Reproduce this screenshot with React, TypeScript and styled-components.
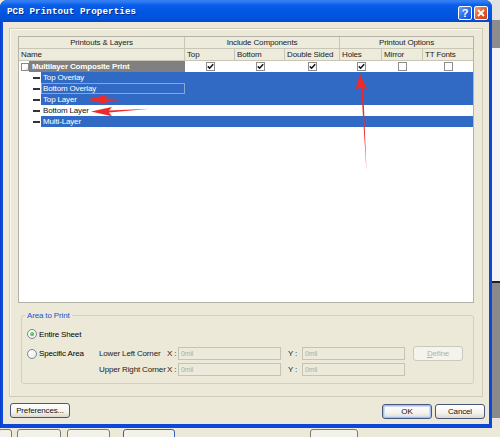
import React from "react";
import styled, { createGlobalStyle, css } from "styled-components";

const Global = createGlobalStyle`
  html, body { margin: 0; padding: 0; background: #ece9d8; }
  body {
    width: 500px; height: 437px; overflow: hidden;
    font-family: "Liberation Sans", Arial, sans-serif;
    font-size: 8px; letter-spacing: -0.15px; color: #000;
  }
  * { box-sizing: border-box; }
`;

const Screen = styled.div`
  position: relative;
  width: 500px;
  height: 437px;
  display: grid;
  grid-template-columns: 492px 8px;
  grid-template-rows: 428px 9px;
  background: #ece9d8;
  overflow: hidden;
`;

const Window = styled.div`
  display: flex;
  flex-direction: column;
  background: linear-gradient(90deg, #0630b8 0, #0a4ee0 1px, #0b48d8 3px);
  border-radius: 7px 7px 0 0;
  overflow: hidden;
`;

const TitleBar = styled.div`
  height: 22px;
  flex: 0 0 22px;
  display: flex;
  align-items: center;
  padding: 0 4px 0 7px;
  background: linear-gradient(180deg, #3a7ff0 0, #2a78f4 2px, #0a5ee8 5px, #0056e2 12px, #0052da 19px, #0848cc 22px);
`;

const Title = styled.div`
  flex: 1;
  font-family: "Liberation Mono", "DejaVu Sans Mono", monospace;
  font-weight: bold;
  font-size: 9.2px;
  letter-spacing: 0.1px;
  color: #fff;
  text-shadow: 1px 1px 0 #0a2c8c;
  white-space: pre;
  padding-top: 1px;
`;

const TitleButtons = styled.div`
  display: flex;
  gap: 2px;
  margin-top: 3px;
`;

const CapButton = styled.div<{ $kind: "help" | "close" }>`
  width: 14px;
  height: 14px;
  border: 1px solid #fff;
  border-radius: 2px;
  display: flex;
  align-items: center;
  justify-content: center;
  color: #fff;
  font-family: "Liberation Sans", Arial, sans-serif;
  font-weight: bold;
  font-size: 11px;
  letter-spacing: 0;
  ${(p) =>
    p.$kind === "help"
      ? css`background: linear-gradient(135deg, #6aa0ff, #2a64e8 60%, #1d52d8);`
      : css`background: linear-gradient(135deg, #f59a7a, #e25a2c 55%, #c8401a);`}
`;

const Body = styled.div`
  flex: 1;
  margin: 0 3px 4px 3px;
  background: #ece9d8;
  display: flex;
  flex-direction: column;
  padding: 6px 0 0 6px;
`;

const Panel = styled.div`
  width: 474px;
  height: 369px;
  border: 1px solid #cfccbc;
  box-shadow: inset 1px 1px 0 #f8f7f2;
  padding: 7px 8px 0 8px;
  display: flex;
  flex-direction: column;
`;

const DataGrid = styled.div`
  height: 267px;
  border: 1px solid #b4b2a8;
  background: #fff;
  display: flex;
  flex-direction: column;
  overflow: hidden;
`;

const COLS = "166px 50px 50px 55px 42px 41px 1fr";

const HeaderRow = styled.div`
  display: grid;
  grid-template-columns: ${COLS};
  height: 12px;
  background: #ecebdc;
`;

const HeadCell = styled.div<{ $span?: number; $center?: boolean; $last?: boolean }>`
  grid-column: span ${(p) => p.$span ?? 1};
  height: 12px;
  line-height: 11px;
  border-bottom: 1px solid #c9c6b6;
  border-right: ${(p) => (p.$last ? "none" : "1px solid #c9c6b6")};
  text-align: ${(p) => (p.$center ? "center" : "left")};
  padding-left: ${(p) => (p.$center ? "0" : "2px")};
  color: #222;
  white-space: nowrap;
  overflow: hidden;
`;

const DataRow = styled.div`
  display: grid;
  grid-template-columns: ${COLS};
  height: 11px;
`;

const CheckCell = styled.div`
  display: flex;
  align-items: center;
  justify-content: center;
  height: 11px;
`;

const Box = styled.div`
  width: 9px;
  height: 9px;
  border: 1px solid #8e8e8e;
  background: #fff;
  display: flex;
  align-items: center;
  justify-content: center;
`;

const NameCell = styled.div`
  display: flex;
  align-items: center;
  height: 11px;
  padding-left: 2px;
`;

const DocIcon = styled.div`
  width: 8px;
  height: 8px;
  border: 1px solid #8a8a8a;
  background: linear-gradient(135deg, #fff 60%, #d8d8d8);
`;

const CompositeLabel = styled.div`
  flex: 1;
  height: 11px;
  line-height: 11px;
  background: #808080;
  color: #fff;
  font-weight: bold;
  padding-left: 3px;
  white-space: nowrap;
`;

const LayerRow = styled.div`
  display: flex;
  height: 11px;
`;

const Connector = styled.div`
  width: 22px;
  flex: 0 0 22px;
  display: flex;
  align-items: center;
  &::before {
    content: "";
    display: block;
    margin-left: 14px;
    width: 7px;
    height: 2px;
    background: #333;
  }
`;

const LayerBody = styled.div<{ $selected: boolean }>`
  flex: 1;
  background: ${(p) => (p.$selected ? "#316ac5" : "#fff")};
`;

const LayerName = styled.div<{ $selected: boolean; $focus?: boolean }>`
  width: 144px;
  height: 11px;
  line-height: 11px;
  padding-left: 2px;
  color: ${(p) => (p.$selected ? "#fff" : "#111")};
  white-space: nowrap;
  ${(p) =>
    p.$focus &&
    css`
      outline: 1px solid #8da5d4;
      outline-offset: -1px;
    `}
`;

const GroupBox = styled.div`
  position: relative;
  margin: 12px 0 0 3px;
  height: 69px;
  border: 1px solid #d3d0c0;
  border-radius: 3px;
  padding: 11px 0 0 5px;
  display: grid;
  grid-template-columns: 72px 67px 12px 103px 21px 103px 8px 50px;
  grid-template-rows: 19px 16px 15px;
  align-items: start;
`;

const Legend = styled.span`
  position: absolute;
  top: -6px;
  left: 3px;
  padding: 0 2px;
  background: #ece9d8;
  color: #1c4fd0;
  line-height: 11px;
`;

const RadioOption = styled.label<{ $row: number }>`
  grid-column: 1;
  grid-row: ${(p) => p.$row};
  display: flex;
  align-items: center;
  gap: 2px;
  height: ${(p) => (p.$row === 1 ? 14 : 15)}px;
  white-space: nowrap;
`;

const RadioCircle = styled.span<{ $checked?: boolean }>`
  width: 10px;
  height: 10px;
  border-radius: 50%;
  border: 1px solid #7d8a99;
  background: radial-gradient(circle at 35% 35%, #fff, #e6e6e0);
  display: flex;
  align-items: center;
  justify-content: center;
  &::after {
    content: "";
    display: ${(p) => (p.$checked ? "block" : "none")};
    width: 4px;
    height: 4px;
    border-radius: 50%;
    background: radial-gradient(circle at 35% 35%, #7fe07f, #21a121);
  }
`;

const FieldLabel = styled.div<{ $row: number; $col: number; $pad?: number }>`
  grid-column: ${(p) => p.$col};
  grid-row: ${(p) => p.$row};
  height: 15px;
  line-height: 15px;
  padding-left: ${(p) => p.$pad ?? 0}px;
  white-space: nowrap;
  color: #222;
`;

const FieldInput = styled.div<{ $row: number; $col: number }>`
  grid-column: ${(p) => p.$col};
  grid-row: ${(p) => p.$row};
  margin-top: 1px;
  height: 13px;
  border: 1px solid #c5c3b6;
  background: #ebeadb;
  color: #b1afa3;
  font-size: 7px;
  line-height: 11px;
  padding-left: 2px;
`;

const DefineButton = styled.div`
  grid-column: 8;
  grid-row: 2;
  height: 15px;
  border: 1px solid #cbc9bb;
  border-radius: 3px;
  background: #f4f3ec;
  color: #b4b2a6;
  text-align: center;
  line-height: 13px;
  u { text-decoration: underline; }
`;

const Footer = styled.div`
  display: flex;
  justify-content: space-between;
  align-items: flex-start;
  margin-top: 6px;
  padding: 0 4px 0 1px;
`;

const ButtonGroup = styled.div`
  display: flex;
  gap: 3px;
  margin-top: 1px;
`;

const XPButton = styled.div<{ $w: number; $default?: boolean }>`
  width: ${(p) => p.$w}px;
  height: 15px;
  border: 1px solid #49587a;
  border-radius: 3px;
  background: linear-gradient(180deg, #ffffff 0, #f4f3ee 60%, #dcd8cc 100%);
  text-align: center;
  line-height: 13px;
  color: #111;
  white-space: nowrap;
  ${(p) =>
    p.$default &&
    css`
      box-shadow: inset 0 0 0 1px #a6c0ee, inset 0 0 0 2px #cddcf6;
    `}
`;

const RightStrip = styled.div`
  background: linear-gradient(
    180deg,
    #e2e2e2 0,
    #e2e2e2 20px,
    #8c8c8c 20px,
    #8c8c8c 48px,
    #f4f4f4 48px,
    #f4f4f4 281px,
    #1e1e1e 281px,
    #1e1e1e 283px,
    #8a8a8a 283px,
    #8a8a8a 418px,
    #e8e6dc 418px
  );
`;

const TaskStrip = styled.div`
  grid-column: 1 / span 2;
  display: flex;
  align-items: flex-start;
  background: #ece9d8;
  padding-top: 1px;
  overflow: hidden;
`;

const TaskTab = styled.div<{ $w: number; $ml: number; $blue?: boolean }>`
  width: ${(p) => p.$w}px;
  margin-left: ${(p) => p.$ml}px;
  height: 12px;
  border: 1px solid ${(p) => (p.$blue ? "#3a5fb8" : "#7b7b72")};
  border-radius: 3px;
  background: #f2f1ea;
  flex: 0 0 auto;
`;

const Annotations = styled.svg`
  position: absolute;
  left: 0;
  top: 0;
  width: 500px;
  height: 437px;
  pointer-events: none;
`;

const Check = () => (
  <svg width="7" height="7" viewBox="0 0 7 7">
    <path d="M0.8 3.4 L2.6 5.2 L6.2 1.2" fill="none" stroke="#111" strokeWidth="1.5" />
  </svg>
);

const CheckBox = ({ checked }: { checked: boolean }) => (
  <CheckCell>
    <Box>{checked && <Check />}</Box>
  </CheckCell>
);

const layers = [
  { name: "Top Overlay", selected: true },
  { name: "Bottom Overlay", selected: true, focus: true },
  { name: "Top Layer", selected: true },
  { name: "Bottom Layer", selected: false },
  { name: "Multi-Layer", selected: true },
];

export default function App() {
  return (
    <>
      <Global />
      <Screen>
        <Window>
          <TitleBar>
            <Title>PCB Printout Properties</Title>
            <TitleButtons>
              <CapButton $kind="help">?</CapButton>
              <CapButton $kind="close">
                <svg width="8" height="8" viewBox="0 0 8 8">
                  <path d="M1 1 L7 7 M7 1 L1 7" stroke="#fff" strokeWidth="1.8" />
                </svg>
              </CapButton>
            </TitleButtons>
          </TitleBar>
          <Body>
            <Panel>
              <DataGrid>
                <HeaderRow>
                  <HeadCell $center>Printouts &amp; Layers</HeadCell>
                  <HeadCell $span={3} $center>Include Components</HeadCell>
                  <HeadCell $span={3} $center $last>Printout Options</HeadCell>
                </HeaderRow>
                <HeaderRow>
                  <HeadCell>Name</HeadCell>
                  <HeadCell>Top</HeadCell>
                  <HeadCell>Bottom</HeadCell>
                  <HeadCell>Double Sided</HeadCell>
                  <HeadCell>Holes</HeadCell>
                  <HeadCell>Mirror</HeadCell>
                  <HeadCell $last>TT Fonts</HeadCell>
                </HeaderRow>
                <DataRow>
                  <NameCell>
                    <DocIcon />
                    <CompositeLabel>Multilayer Composite Print</CompositeLabel>
                  </NameCell>
                  <CheckBox checked />
                  <CheckBox checked />
                  <CheckBox checked />
                  <CheckBox checked />
                  <CheckBox checked={false} />
                  <CheckBox checked={false} />
                </DataRow>
                {layers.map((l) => (
                  <LayerRow key={l.name}>
                    <Connector />
                    <LayerBody $selected={l.selected}>
                      <LayerName $selected={l.selected} $focus={l.focus}>
                        {l.name}
                      </LayerName>
                    </LayerBody>
                  </LayerRow>
                ))}
              </DataGrid>
              <GroupBox>
                <Legend>Area to Print</Legend>
                <RadioOption $row={1}>
                  <RadioCircle $checked />
                  Entire Sheet
                </RadioOption>
                <RadioOption $row={2}>
                  <RadioCircle />
                  Specific Area
                </RadioOption>
                <FieldLabel $row={2} $col={2}>Lower Left Corner</FieldLabel>
                <FieldLabel $row={2} $col={3} $pad={1}>X :</FieldLabel>
                <FieldInput $row={2} $col={4}>0mil</FieldInput>
                <FieldLabel $row={2} $col={5} $pad={7}>Y :</FieldLabel>
                <FieldInput $row={2} $col={6}>0mil</FieldInput>
                <DefineButton>
                  <u>D</u>efine
                </DefineButton>
                <FieldLabel $row={3} $col={2}>Upper Right Corner</FieldLabel>
                <FieldLabel $row={3} $col={3} $pad={1}>X :</FieldLabel>
                <FieldInput $row={3} $col={4}>0mil</FieldInput>
                <FieldLabel $row={3} $col={5} $pad={7}>Y :</FieldLabel>
                <FieldInput $row={3} $col={6}>0mil</FieldInput>
              </GroupBox>
            </Panel>
            <Footer>
              <XPButton $w={60}>Preferences...</XPButton>
              <ButtonGroup>
                <XPButton $w={50} $default>OK</XPButton>
                <XPButton $w={50}>Cancel</XPButton>
              </ButtonGroup>
            </Footer>
          </Body>
        </Window>
        <RightStrip />
        <TaskStrip>
          <TaskTab $w={14} $ml={-2} />
          <TaskTab $w={44} $ml={5} />
          <TaskTab $w={43} $ml={6} />
          <TaskTab $w={52} $ml={13} $blue />
          <TaskTab $w={48} $ml={135} />
        </TaskStrip>
        <Annotations viewBox="0 0 500 437">
          <polygon points="87,99.5 108,94.5 105,98.4 128,99.6 105,101.3 108,104.5" fill="#ee2a2a" />
          <polygon points="91,111.6 112,107 109,110.4 150,108.8 109,112.6 112,116.2" fill="#ee2a2a" />
          <polygon points="360,74 367,89 363.2,88 366.5,172 361.2,88 355.5,89" fill="#ee2a2a" />
        </Annotations>
      </Screen>
    </>
  );
}
